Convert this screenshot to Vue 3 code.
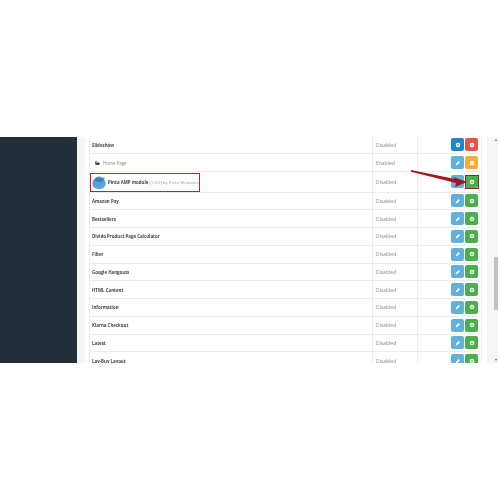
<template>
  <div class="page">
    <div class="shot">
      <aside class="sidebar"></aside>
      <div class="gutter"></div>
      <main class="content">
        <div class="table">
          <div
            v-for="row in rows"
            :key="row.name"
            class="row"
            :class="{ tall: row.logo }"
          >
            <div class="cell name">
              <span v-if="row.child" class="child">
                <svg class="folder" viewBox="0 0 10 8">
                  <path d="M0 1h4l1 1h4v1H2L0 7zM2.500 4H10L8 8H.5z" fill="#444" />
                </svg>
                {{ row.name }}
              </span>
              <template v-else-if="row.logo">
                <svg class="logo" viewBox="0 0 14 14">
                  <path
                    d="M7 1.500c1.500 0 2.500.5 3.500 1.300L12.500 2l-.4 2.500C13.300 6 13.800 7.500 13.500 9.500 13 12.500 10.500 14 7 14S1 12.500.5 9.500C.2 7.500.8 5.800 2 4.500 3.300 2.500 5 1.500 7 1.500z"
                    fill="#5a9fd8"
                  />
                  <path d="M2.500 5.500C4.500 7.300 9.500 7.300 12 5 10.500 3 9 2.500 7 2.500S3.500 3.500 2.500 5.500z" fill="#3b7fbb" />
                </svg>
                <strong>{{ row.name }}</strong>
                <span class="meta">[1.0.0] by Pinta Webware</span>
              </template>
              <strong v-else>{{ row.name }}</strong>
            </div>
            <div class="cell status">{{ row.status }}</div>
            <div class="cell actions">
              <span class="btn" :class="row.left">
                <svg v-if="row.left === 'edit'" viewBox="0 0 8 8">
                  <path d="M1 7l.4-2L5 1.400 6.600 3 3 6.600z" fill="#fff" />
                </svg>
                <svg v-else viewBox="0 0 8 8">
                  <circle cx="4" cy="4" r="3" fill="#fff" />
                  <rect x="2.400" y="3.400" width="3.200" height="1.200" fill="#1e88c7" />
                </svg>
              </span>
              <span class="btn" :class="row.right">
                <svg viewBox="0 0 8 8">
                  <circle cx="4" cy="4" r="3" fill="#fff" />
                  <rect
                    v-if="row.right !== 'install'"
                    x="2.400"
                    y="3.400"
                    width="3.200"
                    height="1.200"
                    :fill="row.right === 'remove' ? '#e2574c' : '#f3ad3c'"
                  />
                  <path
                    v-else
                    d="M3.500 2.400h1v1.100h1.100v1H4.500v1.100h-1V4.500H2.400v-1h1.100z"
                    fill="#4cae4c"
                  />
                </svg>
              </span>
            </div>
          </div>
        </div>
      </main>
      <div class="scrollbar">
        <span class="arrow-up"></span>
        <span class="thumb"></span>
        <span class="arrow-down"></span>
      </div>
      <div class="mark-name"></div>
      <div class="mark-button"></div>
      <svg class="pointer" viewBox="0 0 58 18">
        <path d="M0 0 44 9 42.500 7 56 12 44 17 45 13 0 1.800Z" fill="#a3161c" />
      </svg>
    </div>
  </div>
</template>

<script setup>
const rows = [
  { name: "Slideshow", status: "Disabled", left: "info", right: "remove" },
  { name: "Home Page", status: "Enabled", left: "edit", right: "warn", child: true },
  { name: "Pinta AMP module", status: "Disabled", left: "edit", right: "install", logo: true },
  { name: "Amazon Pay", status: "Disabled", left: "edit", right: "install" },
  { name: "Bestsellers", status: "Disabled", left: "edit", right: "install" },
  { name: "Divido Product Page Calculator", status: "Disabled", left: "edit", right: "install" },
  { name: "Filter", status: "Disabled", left: "edit", right: "install" },
  { name: "Google Hangouts", status: "Disabled", left: "edit", right: "install" },
  { name: "HTML Content", status: "Disabled", left: "edit", right: "install" },
  { name: "Information", status: "Disabled", left: "edit", right: "install" },
  { name: "Klarna Checkout", status: "Disabled", left: "edit", right: "install" },
  { name: "Latest", status: "Disabled", left: "edit", right: "install" },
  { name: "Lay-Buy Layout", status: "Disabled", left: "edit", right: "install" },
];
</script>

<style>
html,
body {
  background: #fff;
  overflow: hidden;
}
</style>

<style scoped>
.page {
  width: 500px;
  height: 500px;
  padding-top: 137px;
  box-sizing: border-box;
  font-family: "Open Sans", sans-serif;
}

.shot {
  position: relative;
  display: flex;
  width: 498px;
  height: 226px;
  overflow: hidden;
  filter: blur(0.4px);
}

.sidebar {
  width: 77px;
  background: #232f3b;
}

.gutter {
  width: 8px;
  background: #f6f6f6;
}

.content {
  width: 402px;
  padding-left: 4px;
  padding-right: 5px;
  box-sizing: border-box;
}

.table {
  margin-top: -0.5px;
  border-left: 1px solid #ececec;
  border-right: 1px solid #ececec;
}

.row {
  display: flex;
  height: 17.750px;
  box-sizing: border-box;
  border-bottom: 1px solid #ececec;
  align-items: center;
}

.row.tall {
  height: 20.500px;
}

.cell {
  height: 100%;
  display: flex;
  align-items: center;
  font-size: 4.400px;
}

.name {
  width: 282px;
  padding-left: 2px;
  box-sizing: border-box;
  color: #444;
  gap: 1px;
}

.name strong {
  font-weight: 700;
  color: #444;
}

.child {
  display: flex;
  align-items: center;
  gap: 3px;
  padding-left: 3px;
  color: #888;
}

.folder {
  width: 5px;
  height: 4px;
}

.logo {
  width: 14px;
  height: 14px;
  margin-right: 1px;
}

.meta {
  color: #999;
  font-size: 4.300px;
}

.status {
  width: 45px;
  padding-left: 3px;
  box-sizing: border-box;
  border-left: 1px solid #ececec;
  color: #888;
  font-size: 5px;
}

.actions {
  flex: 1;
  border-left: 1px solid #ececec;
  justify-content: flex-end;
  gap: 1px;
  padding-right: 3px;
}

.btn {
  width: 13px;
  height: 13px;
  border-radius: 2px;
  display: flex;
  align-items: center;
  justify-content: center;
}

.btn svg {
  width: 6px;
  height: 6px;
}

.info {
  background: #1e88c7;
}

.edit {
  background: #62b0dc;
}

.remove {
  background: #e2574c;
}

.warn {
  background: #f3ad3c;
}

.install {
  background: #4cae4c;
}

.scrollbar {
  position: relative;
  width: 11px;
  background: #f5f5f5;
}

.thumb {
  position: absolute;
  left: 7px;
  top: 120px;
  width: 4px;
  height: 53px;
  background: #c1c1c1;
}

.arrow-up,
.arrow-down {
  position: absolute;
  left: 7.500px;
  width: 0;
  height: 0;
  border-left: 1.500px solid transparent;
  border-right: 1.500px solid transparent;
}

.arrow-up {
  top: 2px;
  border-bottom: 2px solid #555;
}

.arrow-down {
  bottom: 2px;
  border-top: 2px solid #555;
}

.mark-name {
  position: absolute;
  left: 90px;
  top: 36px;
  width: 110px;
  height: 19px;
  box-sizing: border-box;
  border: 1.500px solid #b5272d;
}

.mark-button {
  position: absolute;
  left: 465px;
  top: 38px;
  width: 14px;
  height: 14px;
  box-sizing: border-box;
  border: 1.500px solid #7d2b20;
}

.pointer {
  position: absolute;
  left: 411px;
  top: 33px;
  width: 58px;
  height: 18px;
}
</style>
